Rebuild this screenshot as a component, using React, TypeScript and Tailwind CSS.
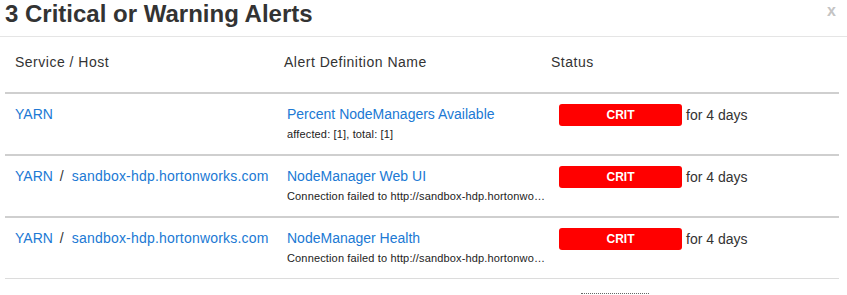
import React from "react";

type Row = {
  host?: string;
  name: string;
  sub: string;
  last?: boolean;
};

const rows: Row[] = [
  { name: "Percent NodeManagers Available", sub: "affected: [1], total: [1]" },
  {
    host: "sandbox-hdp.hortonworks.com",
    name: "NodeManager Web UI",
    sub: "Connection failed to http://sandbox-hdp.hortonworks.com:8042 (timed out)",
  },
  {
    host: "sandbox-hdp.hortonworks.com",
    name: "NodeManager Health",
    sub: "Connection failed to http://sandbox-hdp.hortonworks.com:8042/ws/v1/node/info",
    last: true,
  },
];

export default function App() {
  return (
    <div
      className="w-[847px] h-[295px] overflow-hidden bg-white text-[#333]"
      style={{ fontFamily: '"Liberation Sans", Arial, Helvetica, sans-serif' }}
    >
      {/* Modal header */}
      <div className="h-[37px] border-b border-[#e5e5e5] flex justify-between items-start">
        <h1 className="pl-[5px] mt-[1px] text-[24px] leading-[26px] font-bold text-[#333]">
          3 Critical or Warning Alerts
        </h1>
        <span className="mt-[3px] mr-[11px] text-[16px] leading-[16px] font-bold text-[#c4c4c4]">
          x
        </span>
      </div>

      {/* Table */}
      <div className="mx-[5px] w-[834px]">
        <div className="grid grid-cols-[269px_267px_298px] h-[57px] border-b-2 border-[#cfcfcf] text-[14px] tracking-[0.5px] leading-[20px] pt-[15px]">
          <div className="pl-[10px]">Service / Host</div>
          <div className="pl-[10px]">Alert Definition Name</div>
          <div className="pl-[10px]">Status</div>
        </div>

        {rows.map((r, i) => (
          <div
            key={i}
            className={
              r.last
                ? "grid grid-cols-[269px_267px_298px] h-[61px] border-b border-[#dcdcdc] pt-[10px]"
                : "grid grid-cols-[269px_267px_298px] h-[62px] border-b-2 border-[#cfcfcf] pt-[10px]"
            }
          >
            <div className="pl-[10px] flex items-start text-[14px] leading-[20px] whitespace-nowrap">
              <a className="text-[#2079d4]">YARN</a>
              {r.host && (
                <>
                  <span className="ml-[7px] text-[#333]">/</span>
                  <a className="ml-[8px] tracking-[0.2px] text-[#2079d4]">{r.host}</a>
                </>
              )}
            </div>
            <div className="pl-[13px]">
              <a className="block text-[14px] leading-[20px] text-[#2079d4] whitespace-nowrap">
                {r.name}
              </a>
              <div className="w-[258px] truncate text-[11px] tracking-[0.15px] leading-[20px] text-[#222]">
                {r.sub}
              </div>
            </div>
            <div className="pl-[18px] flex items-start">
              <span className="w-[123px] h-[22px] rounded-[3px] bg-[#ff0000] text-white text-[12px] leading-[22px] font-bold text-center">
                CRIT
              </span>
              <span className="ml-[4px] text-[14px] leading-[22px] text-[#333]">for 4 days</span>
            </div>
          </div>
        ))}

        <div className="mt-[14px] ml-[576px] w-[68px] h-[10px] border-t border-dotted border-[#666]" />
      </div>
    </div>
  );
}
